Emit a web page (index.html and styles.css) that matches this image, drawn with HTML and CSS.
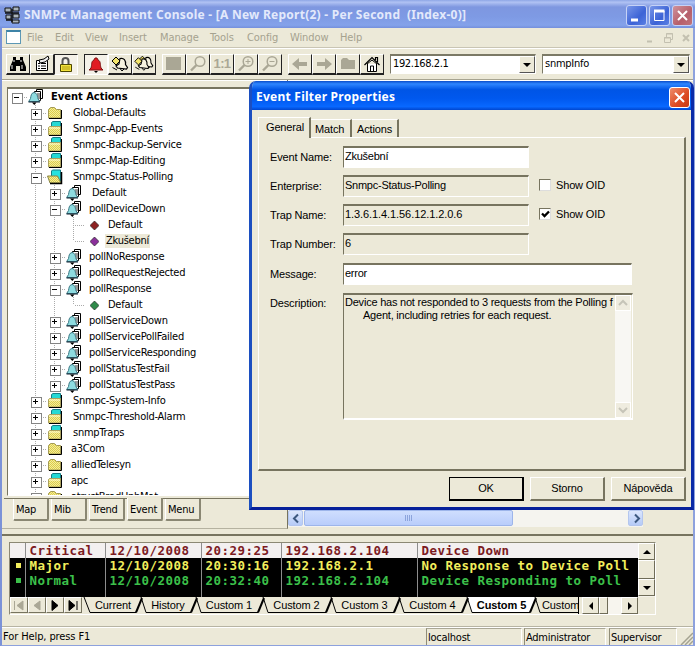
FILE: index.html
```html
<!DOCTYPE html>
<html lang="en">
<head>
<meta charset="utf-8">
<title>SNMPc Management Console</title>
<link rel="stylesheet" href="styles.css">
</head>
<body>
<svg class="defs" width="0" height="0">
  <defs>
    <pattern id="dither" width="2" height="2" patternUnits="userSpaceOnUse"><rect width="2" height="2" fill="#f3ee9a"/><rect width="1" height="1" fill="#dccb4c"/><rect x="1" y="1" width="1" height="1" fill="#dccb4c"/></pattern>
    <symbol id="bell" viewBox="0 0 16 16"><path d="M8.500 2.500v-2h6v9h-2" fill="#fff" stroke="#000"/><path d="M6.500 2.500h6v9h-6z" fill="#fff" stroke="#000"/><path d="M9 5h3M9 7h3M10 9h2" stroke="#333"/><path d="M6 3.500C3 4 3 7 2.500 9.500L.7 12.500h11L9.800 9.500c-.5-2.500-.5-5.500-3.800-6z" fill="#8edbe0" stroke="#3c7884"/><path d="M.5 13h11.500" stroke="#123"/><path d="M4 13.500h4.500L6.300 16z" fill="#000"/></symbol>
    <symbol id="folder" viewBox="0 0 16 16"><path d="M1.500 13V4.500l2-2h4l2 2h4V13z" fill="url(#dither)" stroke="#a39a55"/><path d="M2 13.500h12.500V5" fill="none" stroke="#000"/></symbol>
    <symbol id="docs" viewBox="0 0 16 16"><path d="M4.500 6V1.500L6 .5h7.500V6z" fill="#25d9d4" stroke="#147d86"/><path d="M1.500 14V6.500l1-1h11V14z" fill="url(#dither)" stroke="#aaa05e"/><path d="M2 7h11" stroke="#fffbd0"/><path d="M2 14.500h12.500V2" fill="none" stroke="#000"/></symbol>
    <symbol id="open" viewBox="0 0 16 16"><path d="M4.500 8V2l1-1h8v12z" fill="#25e2df" stroke="#147d86"/><path d="M.5 7h10l3.500 7H3z" fill="url(#dither)" stroke="#888344"/><path d="M3 14.500h11.500V3" fill="none" stroke="#000" stroke-width="1.500"/></symbol>
    <symbol id="belltool" viewBox="0 0 20 18"><path d="M10 3.500c4-1 6 2 5.500 6l2 3-1 1.500-9-1-1.500-2 3-2z" fill="#f7f3df" stroke="#000" stroke-width="1.200"/><path d="M10 13.500l2 2.500 2-2" fill="none" stroke="#000"/><path d="M2 6l4-4 4 4-4 4z" fill="#f3e56c" stroke="#000"/><path d="M2.500 12.500L7 15" stroke="#000"/></symbol>
    <symbol id="lens" viewBox="0 0 18 18"><circle cx="11" cy="6.500" r="4.800" fill="none" stroke="#aaa795" stroke-width="1.500"/><path d="M7.500 10L2 15.500" stroke="#aaa795" stroke-width="2.400"/></symbol>
    <symbol id="arrow" viewBox="0 0 18 16"><path d="M1 8l7-6v4h8v4H8v4z" fill="#aaa795"/></symbol>
  </defs>
</svg>
<div class="window">
  <header class="titlebar">
    <svg class="appicon" width="17" height="18" viewBox="0 0 17 18"><path d="M1 2h6v4H1zM9 1h6v4H9zM2 9h5v4H2zM9 8h6v4H9zM8 14h7v3H8z" fill="#aab4bd" stroke="#111"/><path d="M1 7h14M8 3v13M2 14h6" stroke="#111" stroke-width="1.500"/></svg>
    <span class="title">SNMPc Management Console - [A New Report(2) - Per Second  (Index-0)]</span>
    <div class="winbtns">
      <b class="wb"><svg width="19" height="19"><path d="M4 14h7" stroke="#fff" stroke-width="3"/></svg></b>
      <b class="wb"><svg width="19" height="19"><path d="M4.500 5v9.500h9.500V5" fill="none" stroke="#fff"/><path d="M4 5h10.500" stroke="#fff" stroke-width="3"/></svg></b>
      <b class="wb red"><svg width="19" height="19"><path d="M5 5l9 9M14 5l-9 9" stroke="#fff" stroke-width="2"/></svg></b>
    </div>
  </header>
  <nav class="menubar">
    <i class="docicon"></i>
    <span class="m1">File</span><span class="m2">Edit</span><span class="m3">View</span><span class="m4">Insert</span><span class="m5">Manage</span><span class="m6">Tools</span><span class="m7">Config</span><span class="m8">Window</span><span class="m9">Help</span>
    <svg class="mdi" width="46" height="12" fill="none" stroke="#c3c0b0"><path d="M2 9.500h5" stroke-width="2"/><path d="M19.500 5.500h6v5h-6zM21.500 5V1.500h6v6H26M21 2h7M19 6h6"/><path d="M38 3l6 6M44 3l-6 6" stroke-width="2"/></svg>
  </nav>
  <div class="toolbar">
    <span class="tb"><svg width="18" height="16" viewBox="0 0 18 16"><path d="M4 1h3v3h4V1h3v3l3 7v4h-6v-5H7v5H1v-4l3-7z" fill="#000"/><path d="M3 9v4M13 9v4M5 4v2M12 4v2" stroke="#eee"/></svg></span>
    <span class="tb"><svg width="18" height="18" viewBox="0 0 18 18"><path d="M3.500 5.500h11v10h-11z" fill="#fff" stroke="#000"/><path d="M5 8.500h2M8 8.500h5M5 11h2M8 11h5M5 13.500h2M8 13.500h5" stroke="#000"/><path d="M6 5l5-1 4-3 1 3-4 3-5 1z" fill="#eee" stroke="#000"/></svg></span>
    <span class="tb down"><svg width="18" height="18" viewBox="0 0 18 18"><path d="M5.500 8V5c0-4 6-4 6 0v3" fill="none" stroke="#555" stroke-width="2"/><path d="M3.500 8.500h11v7h-11z" fill="#f2e23b" stroke="#4d4700"/><path d="M5 11h8M5 13h8" stroke="#b19c18"/></svg></span>
    <span class="tb down gap5"><svg width="18" height="18" viewBox="0 0 18 18"><path d="M8 2h2l1 2c3 1 2 5 3 8l2 2H2l2-2c1-3 0-7 3-8z" fill="#e11b22" stroke="#7e1515"/><path d="M7 15h4l-2 2z" fill="#000"/></svg></span>
    <span class="tb"><svg width="20" height="18"><use href="#belltool"/></svg></span>
    <span class="tb"><svg width="21" height="18" viewBox="0 0 21 18"><use href="#belltool" x="3" y="-1" width="18" height="17"/><use href="#belltool" x="-1" y="0" width="18" height="18"/></svg></span>
    <span class="tb gap6"><svg width="18" height="16"><rect x="1" y="1" width="15" height="13" fill="#aaa795"/></svg></span>
    <span class="tb"><svg width="18" height="18"><use href="#lens"/></svg></span>
    <span class="tb ratio">1:1</span>
    <span class="tb"><svg width="18" height="18"><use href="#lens"/><path d="M8.500 6.500h5M11 4v5" stroke="#aaa795"/></svg></span>
    <span class="tb"><svg width="18" height="18"><use href="#lens"/><path d="M8.500 6.500h5" stroke="#aaa795"/></svg></span>
    <span class="tb gap6"><svg width="18" height="16"><use href="#arrow"/></svg></span>
    <span class="tb"><svg class="flip" width="18" height="16"><use href="#arrow"/></svg></span>
    <span class="tb"><svg width="18" height="16"><path d="M2 13V4l2-2h4l2 2h6v9z" fill="#aaa795"/></svg></span>
    <span class="tb"><svg width="18" height="18" viewBox="0 0 18 18"><path d="M4.500 9v7.500h9V9" fill="#fff" stroke="#000"/><path d="M1.500 10L9 2.500l7.500 7.500M12.500 5V2.500h2V7" fill="none" stroke="#000" stroke-width="1.200"/><path d="M4 9l5-4 5 4" fill="none" stroke="#000"/><path d="M7.500 16v-5h3v5" fill="none" stroke="#000"/></svg></span>
    <div class="combo c1"><span>192.168.2.1</span><i class="drop"></i></div>
    <div class="combo c2"><span>snmpInfo</span><i class="drop"></i></div>
  </div>
  <main class="work">
    <section class="side">
      <div class="tree">
        <div class="row l0"><i class="c minus"></i><svg class="ic"><use href="#bell"/></svg><span>Event Actions</span></div>
        <div class="row l1"><i class="c"></i><i class="c plus"></i><svg class="ic"><use href="#folder"/></svg><span>Global-Defaults</span></div>
        <div class="row l1"><i class="c"></i><i class="c plus"></i><svg class="ic"><use href="#docs"/></svg><span>Snmpc-App-Events</span></div>
        <div class="row l1"><i class="c"></i><i class="c plus"></i><svg class="ic"><use href="#docs"/></svg><span>Snmpc-Backup-Service</span></div>
        <div class="row l1"><i class="c"></i><i class="c plus"></i><svg class="ic"><use href="#docs"/></svg><span>Snmpc-Map-Editing</span></div>
        <div class="row l1"><i class="c"></i><i class="c minus"></i><svg class="ic"><use href="#open"/></svg><span>Snmpc-Status-Polling</span></div>
        <div class="row l2 inset"><i class="c"></i><i class="c v"></i><i class="c plus"></i><svg class="ic"><use href="#bell"/></svg><span>Default</span></div>
        <div class="row l2"><i class="c"></i><i class="c v"></i><i class="c minus"></i><svg class="ic"><use href="#bell"/></svg><span>pollDeviceDown</span></div>
        <div class="row l3 inset"><i class="c"></i><i class="c v"></i><i class="c v"></i><i class="c v h"></i><svg class="dia d-red" viewBox="0 0 9 9"><path d="M4.500 0L9 4.500 4.500 9 0 4.500z"/></svg><span>Default</span></div>
        <div class="row l3"><i class="c"></i><i class="c v"></i><i class="c v"></i><i class="c end h"></i><svg class="dia d-purple" viewBox="0 0 9 9"><path d="M4.500 0L9 4.500 4.500 9 0 4.500z"/></svg><span class="sel">Zkušební</span></div>
        <div class="row l2"><i class="c"></i><i class="c v"></i><i class="c plus"></i><svg class="ic"><use href="#bell"/></svg><span>pollNoResponse</span></div>
        <div class="row l2"><i class="c"></i><i class="c v"></i><i class="c plus"></i><svg class="ic"><use href="#bell"/></svg><span>pollRequestRejected</span></div>
        <div class="row l2"><i class="c"></i><i class="c v"></i><i class="c minus"></i><svg class="ic"><use href="#bell"/></svg><span>pollResponse</span></div>
        <div class="row l3 inset"><i class="c"></i><i class="c v"></i><i class="c v"></i><i class="c end h"></i><svg class="dia d-green" viewBox="0 0 9 9"><path d="M4.500 0L9 4.500 4.500 9 0 4.500z"/></svg><span>Default</span></div>
        <div class="row l2"><i class="c"></i><i class="c v"></i><i class="c plus"></i><svg class="ic"><use href="#bell"/></svg><span>pollServiceDown</span></div>
        <div class="row l2"><i class="c"></i><i class="c v"></i><i class="c plus"></i><svg class="ic"><use href="#bell"/></svg><span>pollServicePollFailed</span></div>
        <div class="row l2"><i class="c"></i><i class="c v"></i><i class="c plus"></i><svg class="ic"><use href="#bell"/></svg><span>pollServiceResponding</span></div>
        <div class="row l2"><i class="c"></i><i class="c v"></i><i class="c plus"></i><svg class="ic"><use href="#bell"/></svg><span>pollStatusTestFail</span></div>
        <div class="row l2"><i class="c"></i><i class="c v"></i><i class="c plus last"></i><svg class="ic"><use href="#bell"/></svg><span>pollStatusTestPass</span></div>
        <div class="row l1"><i class="c"></i><i class="c plus"></i><svg class="ic"><use href="#docs"/></svg><span>Snmpc-System-Info</span></div>
        <div class="row l1"><i class="c"></i><i class="c plus"></i><svg class="ic"><use href="#docs"/></svg><span>Snmpc-Threshold-Alarm</span></div>
        <div class="row l1"><i class="c"></i><i class="c plus"></i><svg class="ic"><use href="#docs"/></svg><span>snmpTraps</span></div>
        <div class="row l1 out"><i class="c"></i><i class="c plus"></i><svg class="ic"><use href="#folder"/></svg><span>a3Com</span></div>
        <div class="row l1 out"><i class="c"></i><i class="c plus"></i><svg class="ic"><use href="#folder"/></svg><span>alliedTelesyn</span></div>
        <div class="row l1 out"><i class="c"></i><i class="c plus"></i><svg class="ic"><use href="#docs"/></svg><span>apc</span></div>
        <div class="row l1 out"><i class="c"></i><i class="c plus"></i><svg class="ic"><use href="#folder"/></svg><span>atrustBradUpbMat</span></div>
      </div>
      <div class="sidetabs"><span>Map</span><span>Mib</span><span>Trend</span><span class="on">Event</span><span>Menu</span></div>
    </section>
    <section class="view">
      <div class="hscroll">
        <i class="xb"><svg width="15" height="15"><path d="M9 3.500L5 7.500l4 4" fill="none" stroke="#3c587f" stroke-width="2"/></svg></i>
        <i class="thumb"></i><i class="track"></i>
        <i class="xb"><svg width="15" height="15"><path d="M6 3.500l4 4-4 4" fill="none" stroke="#3c587f" stroke-width="2"/></svg></i>
      </div>
    </section>
  </main>
  <section class="log">
    <div class="logtop">
      <div class="grid">
        <div class="lr crit"><span></span><span>Critical</span><span>12/10/2008</span><span>20:29:25</span><span>192.168.2.104</span><span>Device Down</span></div>
        <div class="lr maj"><span><i class="dot"></i></span><span>Major</span><span>12/10/2008</span><span>20:30:16</span><span>192.168.2.1</span><span>No Response to Device Poll</span></div>
        <div class="lr norm"><span><i class="dot"></i></span><span>Normal</span><span>12/10/2008</span><span>20:32:40</span><span>192.168.2.104</span><span>Device Responding to Poll</span></div>
        <div class="lr rest"><span></span><span></span><span></span><span></span><span></span><span></span></div>
      </div>
      <div class="vscroll"><i class="sb up"></i><i class="sb mid"></i><i class="sb dn"></i></div>
    </div>
    <div class="logtabs">
      <i class="nav off"><svg width="16" height="15"><path d="M3.500 3v9M12 3v9L6 7.500z"/></svg></i>
      <i class="nav off"><svg width="16" height="15"><path d="M11 3v9L5 7.500z"/></svg></i>
      <i class="nav"><svg width="16" height="15"><path d="M5 2.500v10l6-5z"/></svg></i>
      <i class="nav"><svg width="16" height="15"><path d="M4 2.500v10l6-5zM12 3v9"/></svg></i>
      <div class="tabs">
        <svg class="edge" viewBox="0 0 12 16"><path class="bs" d="M2 0l6 15.500h4"/></svg><span class="t1">Current</span>
        <svg class="edge" viewBox="0 0 12 16"><path class="sl" d="M0 15.500L6 1"/><path class="bs" d="M5 0l5 15.500h2"/></svg><span class="t2">History</span>
        <svg class="edge" viewBox="0 0 12 16"><path class="sl" d="M0 15.500L6 1"/><path class="bs" d="M5 0l5 15.500h2"/></svg><span class="t3">Custom 1</span>
        <svg class="edge" viewBox="0 0 12 16"><path class="sl" d="M0 15.500L6 1"/><path class="bs" d="M5 0l5 15.500h2"/></svg><span class="t4">Custom 2</span>
        <svg class="edge" viewBox="0 0 12 16"><path class="sl" d="M0 15.500L6 1"/><path class="bs" d="M5 0l5 15.500h2"/></svg><span class="t4">Custom 3</span>
        <svg class="edge" viewBox="0 0 12 16"><path class="sl" d="M0 15.500L6 1"/><path class="bs" d="M5 0l5 15.500h2"/></svg><span class="t4">Custom 4</span>
        <svg class="edge" viewBox="0 0 12 16"><path d="M5 0h7v15h-2z" fill="#fff"/><path class="sl" d="M0 15.500L6 1"/><path class="bs" d="M5 0l5 15.500h2"/></svg><span class="t5">Custom 5</span>
        <svg class="edge" viewBox="0 0 12 16"><path d="M0 0h6L0 15z" fill="#fff"/><path class="sl" d="M0 15.500L6 1"/><path class="bs" d="M5 0l5 15.500h2"/></svg><span class="t6">Custom 6</span>
      </div>
      <div class="tabscroll"><i class="sb lf"></i><i class="sb th"></i><i class="sp"></i><i class="sb rt"></i></div>
    </div>
  </section>
  <footer class="status"><span class="help">For Help, press F1</span><span class="p p1">localhost</span><span class="p p2">Administrator</span><span class="p p3">Supervisor</span>
    <svg class="grip" width="13" height="13"><path d="M1 13L13 1M5 13l8-8M9 13l4-4" stroke="#a5a391" stroke-width="1.500"/></svg></footer>
</div>
<div class="dialog">
  <div class="dtitle"><span>Event Filter Properties</span><b class="dclose"><svg width="19" height="19"><path d="M5 5l9 9M14 5l-9 9" stroke="#fff" stroke-width="2"/></svg></b></div>
  <div class="dbody">
    <div class="dtabs"><span class="on">General</span><span class="k2">Match</span><span class="k3">Actions</span></div>
    <div class="page">
      <div class="f"><label>Event Name:</label><div class="field w">Zkušební</div></div>
      <div class="f"><label>Enterprise:</label><div class="field">Snmpc-Status-Polling</div><i class="cb"></i><span class="cl">Show OID</span></div>
      <div class="f"><label>Trap Name:</label><div class="field oid">1.3.6.1.4.1.56.12.1.2.0.6</div><i class="cb"><svg width="9" height="9"><path d="M1 3.500l2.500 2.500L8 1.500" fill="none" stroke="#000" stroke-width="2.300"/></svg></i><span class="cl">Show OID</span></div>
      <div class="f"><label>Trap Number:</label><div class="field">6</div></div>
      <div class="f f5"><label>Message:</label><div class="field w wide">error</div></div>
      <div class="f f6"><label>Description:</label><div class="area"><div class="txt"><div class="ln">Device has not responded to 3 requests from the Polling f</div><div class="ln l2nd">Agent, including retries for each request.</div></div>
        <div class="ascroll"><i><svg width="14" height="15"><path d="M3 9l4-4 4 4" fill="none" stroke="#c6c4b8" stroke-width="2"/></svg></i><i><svg width="14" height="15"><path d="M3 5l4 4 4-4" fill="none" stroke="#c6c4b8" stroke-width="2"/></svg></i></div></div></div>
    </div>
    <div class="btns"><button class="ok">OK</button><button>Storno</button><button>Nápověda</button></div>
  </div>
</div>
</body>
</html>
```
FILE: styles.css
```css
* { box-sizing: border-box; }
body { margin: 0; width: 695px; height: 646px; overflow: hidden; background: #ece9d8; position: relative;
  font: 11px/14px "DejaVu Sans Condensed", "DejaVu Sans", sans-serif; color: #000; letter-spacing: -.25px; }
i, b { font-style: normal; display: block; }
svg { display: block; }
.defs { position: absolute; }
span { white-space: pre; }
.window { width: 695px; height: 646px; display: flex; flex-direction: column; border-left: 2px solid #7b92d8; border-right: 2px solid #8da1dd; border-bottom: 1px solid #8da1dd; }

.titlebar { height: 28px; margin: 0 -2px; flex: none; display: flex; align-items: center; padding: 2px 2px 0 4px; background: linear-gradient(#8ea6e6, #b0c2f3 8%, #7e97e0 25%, #7e9ae4 60%, #84a2ea 90%, #748fdc); }
.appicon { margin-right: 3px; }
.title { flex: 1; color: #e3e9fb; font: bold 12px/18px "Noto Sans", sans-serif; letter-spacing: .25px; }
.winbtns { display: flex; gap: 2px; }
.wb { width: 21px; height: 21px; border: 1px solid #c6d2f6; border-radius: 3px; background: linear-gradient(135deg, #7896e8, #3c63d6 60%, #5a80e4); }
.wb.red { background: linear-gradient(135deg, #d0929b, #b65f6b 60%, #c0747a); }

.menubar { height: 20px; flex: none; display: flex; align-items: center; color: #a5a28f; letter-spacing: -.1px; border-bottom: 1px solid #c9c5b4; background: #ece9d8; }
.docicon { width: 15px; height: 14px; background: #fff; border: 1px solid #5d98b5; border-top: 2px solid #3d83a7; margin: 0 6px 1px 4px; }
.menubar span { flex: none; }
.m1 { width: 28px; } .m2 { width: 30px; } .m3 { width: 34px; } .m4 { width: 41px; } .m5 { width: 50px; } .m6 { width: 37px; } .m7 { width: 43px; } .m8 { width: 50px; }
.mdi { margin-left: auto; margin-right: 2px; }

.toolbar { height: 31px; flex: none; display: flex; padding: 5px 0 0 4px; border-top: 1px solid #fff; }
.tb { width: 24px; height: 21px; flex: none; display: flex; align-items: center; justify-content: center; border: 1px solid #fff; border-right: 1px solid #222; border-bottom: 2px solid #222; }
.tb.down { border: 1px solid #fff; border-top: 1px solid #222; border-left: 1px solid #222; background: #f4f1e8; }
.tb svg { flex: none; }
.gap5 { margin-left: 6px; } .gap6 { margin-left: 6px; }
.ratio { color: #aaa795; font: bold 13px/14px "Liberation Sans", sans-serif; letter-spacing: -.6px; }
.flip { transform: scaleX(-1); }
.combo { height: 20px; display: flex; background: #fff; border: 1px solid #7b7966; border-right-color: #fff; border-bottom-color: #fff; border-top-width: 2px; padding-left: 2px; }
.combo span { flex: 1; line-height: 16px; }
.c1 { width: 146px; margin-left: 6px; } .c2 { width: 148px; margin-left: 6px; }
.c1 span { letter-spacing: -.4px; }
.drop { width: 16px; height: 17px; background: #ece9d8; border: 1px solid #fff; border-right-color: #555; border-bottom-color: #555; display: flex; align-items: center; justify-content: center; }
.drop::after { content: ""; border: 4px solid transparent; border-top-color: #000; border-bottom: 0; }

.work { height: 457px; flex: none; display: flex; border-top: 1px solid #a7a491; border-bottom: 2px solid #77745f; box-shadow: inset 0 1px #fff; }
.side { width: 286px; padding: 7px 0 0 5px; border-right: 1px solid #77745f; height: 449px; border-bottom: 1px solid #b5b2a0; }
.tree { height: 409px; border: 1px solid #77745f; border-top-width: 2px; border-bottom-color: #fff; background: #fff; overflow: hidden; }
.row { height: 16px; display: flex; align-items: center; }
.c { width: 19px; height: 16px; flex: none; position: relative; }
.v, .l1 .plus, .l1 .minus, .l2 .plus, .l2 .minus { background: repeating-linear-gradient(#aaa 0 1px, transparent 1px 2px) 8px 0 / 1px 16px no-repeat; }
.l2 .last { background-size: 1px 8px; }
.end { background: repeating-linear-gradient(#aaa 0 1px, transparent 1px 2px) 8px 0 / 1px 8px no-repeat; }
.h::before, .plus::before, .minus::before { content: ""; position: absolute; left: 10px; top: 8px; width: 10px; height: 1px; background: repeating-linear-gradient(90deg, #aaa 0 1px, transparent 1px 2px); }
.plus::after, .minus::after { content: ""; position: absolute; left: 4px; top: 4px; width: 9px; height: 9px; border: 1px solid #848484; }
.plus::after { background: linear-gradient(#000, #000) 1px 3px / 5px 1px no-repeat, linear-gradient(#000, #000) 3px 1px / 1px 5px no-repeat, #fff; }
.minus::after { background: linear-gradient(#000, #000) 1px 3px / 5px 1px no-repeat, #fff; }
.ic { width: 16px; height: 16px; flex: none; margin: 0 7px 0 1px; }
.l1 .ic { margin: 0 10px 0 1px; }
.l1.out .ic { margin-right: 8px; }
.l2.inset .ic { margin-right: 10px; }
.l0 span { font: bold 11px/14px "DejaVu Sans Condensed", sans-serif; letter-spacing: 0; }
.dia { width: 9px; height: 9px; flex: none; margin: 0 7px 0 6px; stroke: #222; stroke-width: .7; }
.l3.inset .dia { margin-right: 9px; }
.d-red { fill: #8d2222; } .d-purple { fill: #8b2f9b; } .d-green { fill: #2f8a4a; }
.sel { background: #ece9d8; margin-left: -1px; padding: 0 1px; }
.sidetabs { display: flex; gap: 2px; margin: 2px -1px 0 -3px; padding-left: 9px; border-top: 1px solid #77745f; }
.sidetabs span { width: 36px; height: 22px; padding: 4px 0 0 2px; border: 1px solid #fff; border-top: 0; border-right: 2px solid #8a8773; border-bottom: 2px solid #8a8773; border-radius: 0 0 2px 2px; }
.sidetabs .on { margin-top: -1px; height: 23px; padding-top: 5px; background: #ece9d8; }
.view { flex: 1; padding-top: 430px; }
.hscroll { width: 355px; height: 17px; display: flex; gap: 1px; background: #f5f4ef; }
.xb { width: 15px; height: 16px; background: linear-gradient(#dbe6fd, #b6cbf7); border: 1px solid #b4c6ee; border-radius: 2px; }
.thumb { width: 209px; height: 16px; border: 1px solid #9db5ea; border-radius: 2px; background: repeating-linear-gradient(90deg, #8ca4dc 0 1px, transparent 1px 2px) 100px 4px / 8px 6px no-repeat, linear-gradient(#cfdefe, #b9cdfb); }
.track { flex: 1; }

.log { width: 647px; height: 73px; flex: none; margin: 6px 0 0 7px; border: 1px solid #8b8874; border-right-color: #fff; border-bottom-color: #fff; }
.logtop { display: flex; height: 54px; }
.grid { width: 628px; background: #000; }
.lr { display: grid; grid-template-columns: 16px 80px 96px 80px 136px 1fr; height: 15px; font: bold 12.500px/15px "DejaVu Sans Mono", monospace; letter-spacing: .475px; }
.lr span { border-right: 1px solid #8d8d8d; padding-left: 3.500px; height: 100%; }
.lr span:last-child { border: 0; }
.crit { background: #f3f0f0; color: #7c1a1f; }
.maj { color: #f2ee5c; } .norm { color: #3cc04a; } .rest { height: 9px; }
.dot { width: 5px; height: 5px; background: currentColor; margin: 5px 0 0 2px; }
.vscroll { flex: 1; background: #f5f3ea; }
.sb { background: #ece9d8; border: 1px solid #fff; border-right-color: #6f6c58; border-bottom-color: #6f6c58; display: flex; align-items: center; justify-content: center; }
.up, .dn { height: 17px; } .mid { height: 19px; }
.up::after { content: ""; border: 4px solid transparent; border-bottom-color: #000; border-top: 0; }
.dn::after { content: ""; border: 4px solid transparent; border-top-color: #000; border-bottom: 0; }
.lf::after { content: ""; border: 4px solid transparent; border-right-color: #000; border-left: 0; }
.rt::after { content: ""; border: 4px solid transparent; border-left-color: #000; border-right: 0; }
.logtabs { display: flex; height: 17px; }
.nav { width: 18px; height: 16px; border: 1px solid #fff; border-right-color: #77745f; border-bottom-color: #77745f; }
.nav path { stroke: #000; stroke-width: 1; fill: #000; }
.nav.off path { stroke: #aaa795; fill: #aaa795; }
.tabs { width: 497px; display: flex; overflow: hidden; border-right: 1px solid #000; }
.tabs span { flex: none; height: 16px; border-bottom: 1px solid #000; text-align: center; font: 11px/16px "Liberation Sans", sans-serif; letter-spacing: -.1px; padding-right: 3px; }
.edge { width: 12px; height: 16px; flex: none; overflow: visible; }
.edge path.bs { fill: none; stroke: #000; stroke-width: 1; }
.edge path.sl { fill: none; stroke: #000; stroke-width: 2; }
.tabs .t1 { width: 42px; padding: 0; margin: 0; text-indent: -4px; } .t2 { width: 43px; } .t3 { width: 55px; } .t4 { width: 56px; }
.tabs .t5 { width: 56px; background: #fff; font-weight: bold; padding-right: 1px; }
.tabs .t6 { width: 57px; text-align: left; }
.tabscroll { width: 56px; margin-left: 3px; display: flex; background: #f7f5ee; }
.lf, .rt { width: 17px; } .th { width: 9px; } .sp { flex: 1; }

.status { margin-top: auto; height: 18px; flex: none; display: flex; border-top: 1px solid #fff; box-shadow: 0 -1px #b7b4a3; line-height: 18px; }
.help { width: 424px; padding-left: 1px; flex: none; letter-spacing: -.1px; }
.p { border-left: 1px solid #8f8c78; border-top: 1px solid #aaa795; border-right: 1px solid #fff; height: 17px; padding-left: 1px; flex: none; line-height: 17px; }
.p1 { width: 96px; margin-right: 2px; } .p2 { width: 82px; margin-right: 3px; } .p3 { width: 68px; }
.grip { margin: 4px 0 0 auto; }

.dialog { position: absolute; left: 249px; top: 81px; width: 445px; height: 429px; background: #ece9d8; border: 3px solid #0b43cf; border-top: 0; border-left-color: #1c4fc0; border-right-color: #0a2aa8; border-bottom-color: #06209a; border-radius: 7px 7px 0 0; overflow: hidden; font: 11px/14px "Liberation Sans", Arial, sans-serif; letter-spacing: -.15px; }
.dtitle { height: 29px; margin: 0 -3px; padding: 3px 4px 0 7px; display: flex; align-items: center; justify-content: space-between; color: #fff; font: bold 12px/16px "Noto Sans", sans-serif; letter-spacing: .24px; background: linear-gradient(#0a4cc9, #2e86ff 10%, #0055e6 30%, #0058ee 60%, #0868ff 88%, #0046cf); }
.dclose { width: 21px; height: 21px; border: 1px solid #fff; border-radius: 3px; background: linear-gradient(135deg, #ee8d6c, #dc4a22 60%, #c83a14); }
.dbody { padding: 7px 5px 0 6px; }
.dtabs { display: flex; height: 20px; align-items: flex-end; }
.dtabs span { height: 18px; padding: 2px 0 0 6px; border-top: 1px solid #fff; border-right: 2px solid #77745f; width: 41px; line-height: 14px; }
.dtabs .on { width: 53px; height: 21px; border-left: 1px solid #fff; padding: 2px 0 0 7px; margin-bottom: -1px; background: #ece9d8; position: relative; }
.dtabs .k2 { padding-left: 4px; } .dtabs .k3 { width: 47px; padding-left: 5px; }
.page { height: 334px; border: 1px solid #fff; border-right: 2px solid #77745f; border-bottom: 2px solid #77745f; padding: 8px 0 0 11px; }
.f { display: flex; height: 29px; }
.f label { width: 72px; flex: none; padding-top: 4px; margin-right: 1px; white-space: pre; }
.field { width: 186px; height: 22px; border: 1px solid #77745f; border-top-width: 2px; border-right-color: #fff; border-bottom-color: #fff; padding: 1px 0 0 1px; line-height: 14px; letter-spacing: -.25px; white-space: pre; }
.field.w { background: #fff; } .field.wide { width: 289px; }
.field.oid { letter-spacing: -.08px; }
.f5 { height: 30px; margin-top: 1px; }
.f6 label { padding-top: 3px; }
.cb { width: 12px; height: 12px; margin: 4px 5px 0 10px; border: 1px solid #77745f; border-right-color: #ddd; border-bottom-color: #ddd; background: #fff; padding: 1px; }
.cl { padding-top: 3px; }
.area { width: 290px; height: 127px; border: 1px solid #77745f; border-top-width: 2px; border-right-color: #fff; border-bottom: 2px solid #fff; display: flex; }
.txt { width: 271px; padding: 1px 0 0 1px; overflow: hidden; flex: none; letter-spacing: -.22px; }
.ln { white-space: pre; line-height: 13px; }
.l2nd { padding-left: 18px; }
.ascroll { width: 16px; background: #f8f7f3; display: flex; flex-direction: column; justify-content: space-between; }
.ascroll i { height: 16px; background: #efecdf; border: 1px solid #fff; }
.btns { display: flex; gap: 6px; justify-content: flex-end; margin-top: 6px; }
.btns button { width: 75px; height: 24px; padding: 0 0 2px; background: #ece9d8; border: 1px solid #fff; border-right: 2px solid #77745f; border-bottom: 2px solid #77745f; border-radius: 0; font: inherit; letter-spacing: inherit; color: #000; }
.btns .ok { border: 1px solid #000; border-right-width: 2px; border-bottom-width: 2px; }
```
